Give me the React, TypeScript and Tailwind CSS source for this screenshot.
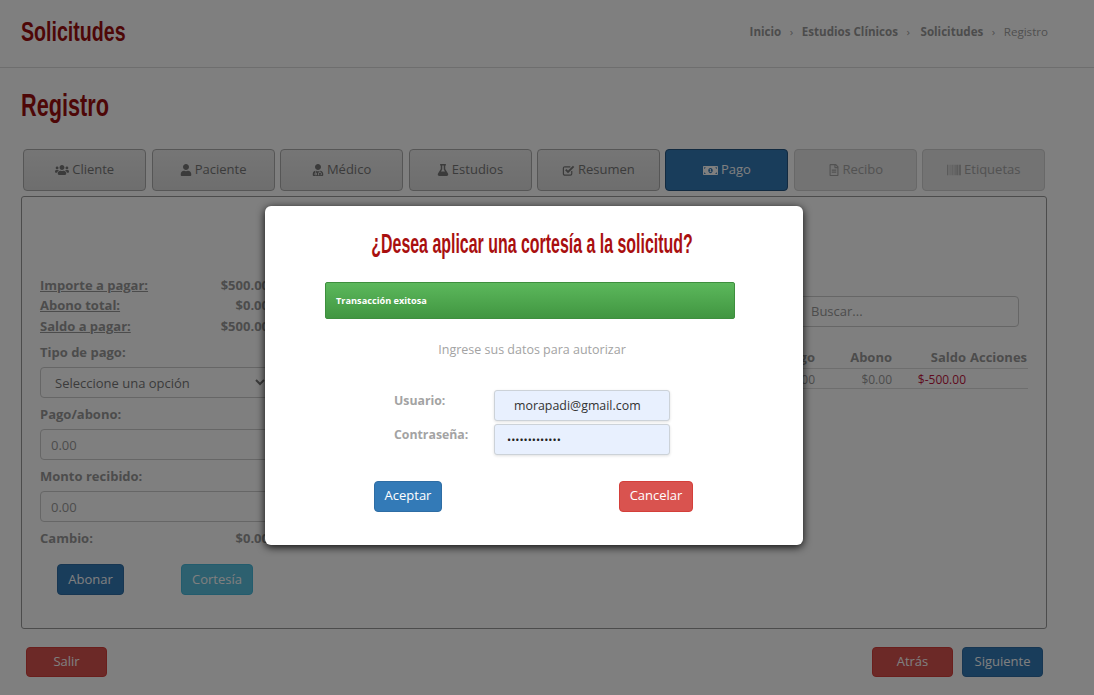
import type { ReactNode } from "react";
import { FaUsers, FaUser, FaUserMd, FaFlask, FaMoneyBillAlt, FaRegFileAlt, FaBarcode } from "react-icons/fa";

// condensed display face isn't installed, so the headings are Arial-width bold squeezed down
const HEAD = "font-['Liberation_Sans',sans-serif] font-bold";

function CheckIcon() {
  return (
    <svg viewBox="0 0 14 14" className="h-[13px] w-[13px]" fill="none" stroke="currentColor">
      <path d="M10.5 7.5v3a1.5 1.5 0 0 1-1.5 1.5H3a1.5 1.5 0 0 1-1.5-1.5V4.5A1.5 1.5 0 0 1 3 3h6" strokeWidth="1.3" />
      <path d="M4 6l2.5 2.5L12.5 2.5" strokeWidth="2" />
    </svg>
  );
}

const TABS = [
  { label: "Cliente", icon: <FaUsers className="text-[14px]" /> },
  { label: "Paciente", icon: <FaUser className="text-[12px]" /> },
  { label: "Médico", icon: <FaUserMd className="text-[12px]" /> },
  { label: "Estudios", icon: <FaFlask className="text-[12px]" /> },
  { label: "Resumen", icon: <CheckIcon /> },
  { label: "Pago", icon: <FaMoneyBillAlt className="text-[15px]" />, active: true },
  { label: "Recibo", icon: <FaRegFileAlt className="text-[12px]" />, disabled: true },
  { label: "Etiquetas", icon: <FaBarcode className="text-[14px]" />, disabled: true },
];

function Tab({ label, icon, active, disabled }: { label: string; icon: ReactNode; active?: boolean; disabled?: boolean }) {
  let tone = "border-[#adadad] bg-gradient-to-b from-[#ececec] to-[#dcdcdc] text-[#777]";
  if (active) tone = "border-[#245580] bg-[#337ab7] text-white";
  if (disabled) tone = "border-[#d0d0d0] bg-[#e6e6e6] text-[#a5a5a5]";
  return (
    <button className={`flex h-[42px] w-[123px] items-center justify-center gap-[3px] rounded-[4px] border text-[13px] ${tone}`}>
      {icon}
      {label}
    </button>
  );
}

function Amount({ label, value, underline }: { label: string; value: string; underline?: boolean }) {
  return (
    <div className="flex justify-between text-[13px] font-bold leading-[20px] text-[#999]">
      <span className={underline ? "underline" : ""}>{label}</span>
      <span>{value}</span>
    </div>
  );
}

function Field({ label }: { label: string }) {
  return (
    <div>
      <p className="mb-[5px] text-[13px] font-bold leading-[20px] text-[#999]">{label}</p>
      <input
        placeholder="0.00"
        className="block h-[31px] w-full rounded-[4px] border border-[#ccc] bg-white px-[10px] text-[13px] placeholder:text-[#999]"
      />
    </div>
  );
}

function Solid({ label, className }: { label: string; className: string }) {
  return (
    <button className={`flex items-center justify-center rounded-[4px] border text-[13px] text-white ${className}`}>
      {label}
    </button>
  );
}

function Modal() {
  return (
    <div className="w-[538px] rounded-[6px] bg-white pb-[33px] pt-[22px] shadow-[0_2px_8px_rgba(0,0,0,0.9)]">
      <h2 className={`${HEAD} -translate-x-[4px] scale-x-[0.59] whitespace-nowrap text-center text-[27px] leading-[32px] text-[#a90f0f]`}>
        ¿Desea aplicar una cortesía a la solicitud?
      </h2>
      <div className="ml-[60px] mr-[68px] mt-[22px] flex h-[37px] items-center rounded-[2px] border border-[#3e8f3e] bg-gradient-to-b from-[#5cb85c] to-[#419641] px-[10px] text-[9.2px] font-bold text-white">
        Transacción exitosa
      </div>
      <p className="mt-[22px] pr-[4px] text-center text-[12.5px] leading-[18px] text-[#a3a3a3]">Ingrese sus datos para autorizar</p>
      <div className="ml-[129px] mt-[31px] flex flex-col gap-[3px]">
        <div className="flex">
          <span className="mt-[2px] w-[100px] text-[12.3px] font-bold leading-[18px] text-[#a3a3a3]">Usuario:</span>
          <input
            readOnly
            value="morapadi@gmail.com"
            className="h-[31px] w-[176px] rounded-[3px] border border-[#ccd2d8] bg-[#e8f0fe] px-[19px] text-[12.4px] text-[#333] shadow-[0_1px_3px_rgba(0,0,0,0.12)]"
          />
        </div>
        <div className="flex">
          <span className="mt-[2px] w-[100px] text-[12.3px] font-bold leading-[18px] text-[#a3a3a3]">Contraseña:</span>
          <input
            readOnly
            type="password"
            value="morapadi12345"
            className="h-[31px] w-[176px] rounded-[3px] border border-[#ccd2d8] bg-[#e8f0fe] px-[12px] text-[11px] text-[#222] shadow-[0_1px_3px_rgba(0,0,0,0.12)]"
          />
        </div>
      </div>
      <div className="ml-[109px] mr-[110px] mt-[26px] flex justify-between">
        <Solid label="Aceptar" className="h-[31px] w-[68px] border-[#2e6da4] bg-[#337ab7] pb-[2px]" />
        <Solid label="Cancelar" className="h-[31px] w-[74px] border-[#d43f3a] bg-[#d9534f] pb-[2px]" />
      </div>
    </div>
  );
}

export default function App() {
  return (
    <div className="relative h-[695px] w-[1094px] overflow-hidden bg-white font-['Open_Sans',sans-serif]">
      <header className="flex h-[68px] items-center justify-between border-b border-[#dcdcdc] pb-[4px] pl-[21px] pr-[46px]">
        <h1 className={`${HEAD} origin-left scale-x-[0.7] text-[28px] text-[#9c0f0f]`}>Solicitudes</h1>
        <nav className="flex items-center gap-[8.5px] text-[11.6px] text-[#a0a0a0]">
          <b className="text-[#999]">Inicio</b>
          <span>›</span>
          <b className="text-[#999]">Estudios Clínicos</b>
          <span>›</span>
          <b className="ml-[2px] text-[#999]">Solicitudes</b>
          <span>›</span>
          <span>Registro</span>
        </nav>
      </header>

      <div className="pl-[21px] pr-[47px]">
        <h2 className={`${HEAD} mt-[18px] origin-left scale-x-[0.7] text-[31px] leading-[40px] text-[#9c0f0f]`}>Registro</h2>

        <div className="mt-[23px] flex gap-[5.45px] pl-[2.2px]">
          {TABS.map((t) => (
            <Tab key={t.label} {...t} />
          ))}
        </div>

        <section className="mt-[5px] flex h-[433px] justify-between rounded-[3px] border border-[#999] pl-[18px] pr-[18px]">
          <div className="mt-[78px] w-[229px]">
            <Amount label="Importe a pagar:" value="$500.00" underline />
            <Amount label="Abono total:" value="$0.00" underline />
            <div className="mt-[1px]">
              <Amount label="Saldo a pagar:" value="$500.00" underline />
            </div>
            <p className="mb-[5px] mt-[6px] text-[13px] font-bold leading-[20px] text-[#999]">Tipo de pago:</p>
            <select className="block h-[31px] w-full rounded-[4px] border border-[#ccc] bg-white pl-[10px] text-[13px] text-[#777]">
              <option>Seleccione una opción</option>
            </select>
            <div className="mt-[6px] flex flex-col gap-[6px]">
              <Field label="Pago/abono:" />
              <Field label="Monto recibido:" />
            </div>
            <div className="mt-[6px]">
              <Amount label="Cambio:" value="$0.00" />
            </div>
            <div className="ml-[17px] mt-[16px] flex gap-[57px]">
              <Solid label="Abonar" className="h-[31px] w-[67px] border-[#2e6da4] bg-[#337ab7]" />
              <Solid label="Cortesía" className="h-[31px] w-[72px] border-[#46b8da] bg-[#5bc0de]" />
            </div>
          </div>

          <div className="mt-[99px] w-[238px]">
            <input
              placeholder="Buscar..."
              className="block h-[31px] w-[229px] rounded-[4px] border border-[#ccc] px-[20px] pb-[2px] text-[13px] placeholder:text-[#999]"
            />
            <table className="mt-[20px] w-full text-[13px] text-[#999]">
              <thead>
                <tr className="border-b border-[#ddd] leading-[20px]">
                  <th className="w-[25px] pb-[1px] text-right font-bold">go</th>
                  <th className="w-[77px] pb-[1px] text-right font-bold">Abono</th>
                  <th className="w-[74px] pb-[1px] text-right font-bold">Saldo</th>
                  <th className="pb-[1px] pl-[4px] text-left font-bold">Acciones</th>
                </tr>
              </thead>
              <tbody>
                <tr className="border-b border-[#ddd] text-[12px] leading-[16px]">
                  <td className="pt-[3px] text-right">00</td>
                  <td className="pt-[3px] text-right">$0.00</td>
                  <td className="pt-[3px] text-right text-[#c0143c]">$-500.00</td>
                  <td />
                </tr>
              </tbody>
            </table>
          </div>
        </section>

        <div className="mt-[18px] flex justify-between pl-[5px] pr-[4px]">
          <Solid label="Salir" className="h-[30px] w-[81px] border-[#d43f3a] bg-[#d9534f]" />
          <div className="flex gap-[9px]">
            <Solid label="Atrás" className="h-[30px] w-[81px] border-[#d43f3a] bg-[#d9534f]" />
            <Solid label="Siguiente" className="h-[30px] w-[81px] border-[#2e6da4] bg-[#337ab7]" />
          </div>
        </div>
      </div>

      <div className="absolute inset-0 bg-black/50 pl-[265px] pt-[206px]">
        <Modal />
      </div>
    </div>
  );
}
